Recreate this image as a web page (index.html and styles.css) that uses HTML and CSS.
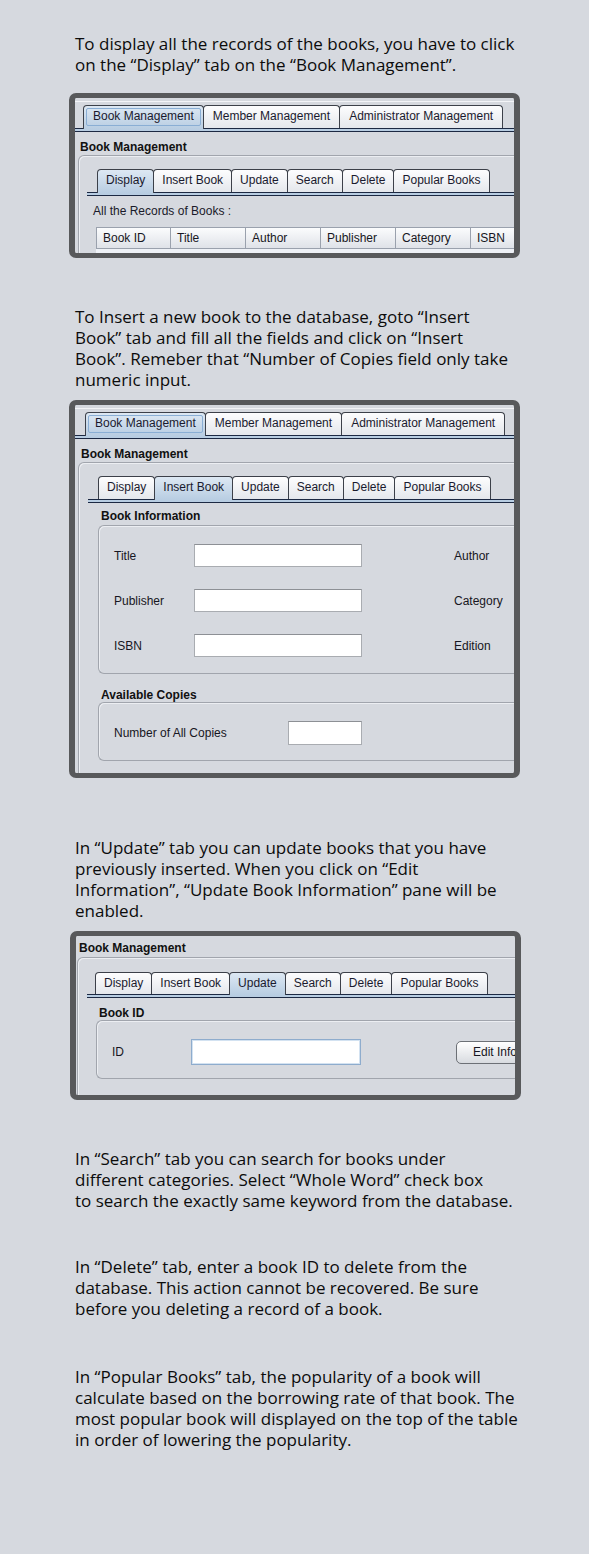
FILE: index.html
```html
<!DOCTYPE html>
<html lang="en">
<head>
<meta charset="utf-8">
<title>Book Management – Help</title>
<link rel="stylesheet" href="styles.css">
</head>
<body>
<main class="doc">
  <p class="note n1">To display all the records of the books, you have to click<br>on the “Display” tab on the “Book Management”.</p>

  <section class="shot s1">
    <div class="win">
      <div class="winline"></div>
      <div class="strip outer">
        <div class="tabs">
          <span class="tab sel focus">Book Management</span>
          <span class="tab">Member Management</span>
          <span class="tab">Administrator Management</span>
        </div>
        <div class="band"></div>
      </div>
      <div class="ttl">Book Management</div>
      <div class="panel">
        <div class="strip inner">
          <div class="tabs">
            <span class="tab sel">Display</span>
            <span class="tab">Insert Book</span>
            <span class="tab">Update</span>
            <span class="tab">Search</span>
            <span class="tab">Delete</span>
            <span class="tab">Popular Books</span>
          </div>
          <div class="band"></div>
        </div>
        <div class="caption">All the Records of Books :</div>
        <div class="thead">
          <span class="th">Book ID</span>
          <span class="th">Title</span>
          <span class="th">Author</span>
          <span class="th">Publisher</span>
          <span class="th">Category</span>
          <span class="th">ISBN</span>
        </div>
        <div class="tbody"></div>
      </div>
    </div>
  </section>

  <p class="note n2">To Insert a new book to the database, goto “Insert<br>Book” tab and fill all the fields and click on “Insert<br>Book”. Remeber that “Number of Copies field only take<br>numeric input.</p>

  <section class="shot s2">
    <div class="win">
      <div class="winline"></div>
      <div class="strip outer">
        <div class="tabs">
          <span class="tab sel focus">Book Management</span>
          <span class="tab">Member Management</span>
          <span class="tab">Administrator Management</span>
        </div>
        <div class="band"></div>
      </div>
      <div class="ttl">Book Management</div>
      <div class="panel">
        <div class="strip inner">
          <div class="tabs">
            <span class="tab">Display</span>
            <span class="tab sel">Insert Book</span>
            <span class="tab">Update</span>
            <span class="tab">Search</span>
            <span class="tab">Delete</span>
            <span class="tab">Popular Books</span>
          </div>
          <div class="band"></div>
        </div>
        <div class="gtitle">Book Information</div>
        <div class="group info">
          <span class="lbl">Title</span><span class="field"></span><span class="lbl far">Author</span>
          <span class="lbl">Publisher</span><span class="field"></span><span class="lbl far">Category</span>
          <span class="lbl">ISBN</span><span class="field"></span><span class="lbl far">Edition</span>
        </div>
        <div class="gtitle gap">Available Copies</div>
        <div class="group copies">
          <span class="lbl">Number of All Copies</span><span class="field short"></span>
        </div>
      </div>
    </div>
  </section>

  <p class="note n3">In “Update” tab you can update books that you have<br>previously inserted. When you click on “Edit<br>Information”, “Update Book Information” pane will be<br>enabled.</p>

  <section class="shot s3">
    <div class="win">
      <div class="ttl">Book Management</div>
      <div class="panel">
        <div class="strip inner">
          <div class="tabs">
            <span class="tab">Display</span>
            <span class="tab">Insert Book</span>
            <span class="tab sel">Update</span>
            <span class="tab">Search</span>
            <span class="tab">Delete</span>
            <span class="tab">Popular Books</span>
          </div>
          <div class="band"></div>
        </div>
        <div class="gtitle">Book ID</div>
        <div class="group idrow">
          <span class="lbl">ID</span><span class="field focused"></span><span class="btn">Edit Information</span>
        </div>
      </div>
    </div>
  </section>

  <p class="note n4">In “Search” tab you can search for books under<br>different categories. Select “Whole Word” check box<br>to search the exactly same keyword from the database.</p>

  <p class="note n5">In “Delete” tab, enter a book ID to delete from the<br>database. This action cannot be recovered. Be sure<br>before you deleting a record of a book.</p>

  <p class="note n6">In “Popular Books” tab, the popularity of a book will<br>calculate based on the borrowing rate of that book. The<br>most popular book will displayed on the top of the table<br>in order of lowering the popularity.</p>
</main>
</body>
</html>
```

FILE: styles.css
```css
html {
  background: #d6d9df;
}
body {
  margin: 0;
  min-height: 1554px;
  background: #d6d9df;
  color: #111;
}
.doc {
  display: flex;
  flex-direction: column;
  align-items: flex-start;
}

/* explanatory paragraphs */
.note {
  margin: 0 0 0 75px;
  font-family: "Open Sans", "DejaVu Sans", sans-serif;
  font-size: 17px;
  line-height: 21px;
  white-space: nowrap;
  color: #0c0c0c;
}
.n1 { margin-top: 33px; }
.n2 { margin-top: 48px; }
.n3 { margin-top: 59px; }
.n4 { margin-top: 48px; }
.n5 { margin-top: 45px; }
.n6 { margin-top: 47px; }

/* screenshot frames */
.shot {
  box-sizing: border-box;
  width: 451px;
  margin-left: 69px;
  border-style: solid;
  border-color: #58595b;
  border-width: 5px 6px;
  border-radius: 7px;
  overflow: hidden;
  background: #d6d9df;
  font-family: "Liberation Sans", Arial, sans-serif;
  font-size: 12px;
  color: #161622;
}
.s1 { margin-top: 18px; height: 165px; }
.s2 { margin-top: 10px; height: 378px; }
.s3 { margin-top: 10px; height: 169px; margin-left: 70px; }

.win {
  padding-top: 3px;
  margin-right: -40px;
}
.s3 .win { padding-top: 5px; }
.winline {
  height: 1px;
  background: #f3f4f7;
}

/* tabs */
.strip { margin-top: 3px; }
.tabs {
  display: flex;
  align-items: flex-end;
  height: 23px;
}
.outer .tabs { padding-left: 8px; }
.s2 .outer .tabs { padding-left: 10px; }
.tab {
  box-sizing: border-box;
  height: 23px;
  padding: 0 8px;
  border: 1px solid #3c4049;
  border-bottom: none;
  border-radius: 4px 4px 0 0;
  margin-left: -1px;
  line-height: 21px;
  white-space: nowrap;
  background: linear-gradient(#fdfdfe, #e4e7ec);
  color: #1a1a2e;
}
.outer .tab { padding: 0 9px; }
.tab:first-child { margin-left: 0; }
.tab.sel {
  position: relative;
  z-index: 1;
  height: 24px;
  margin-bottom: -1px;
  background: linear-gradient(#dde8f3, #b8cde2);
}
.tab.focus::after {
  content: "";
  position: absolute;
  left: 2px;
  right: 2px;
  top: 2px;
  bottom: 3px;
  border: 1px solid #8aaed4;
  border-radius: 2px;
}
.band {
  box-sizing: border-box;
  height: 4px;
  border-top: 1px solid #1c2943;
  border-bottom: 1px solid #1c2943;
  background: #b8cde2;
}

/* titled panel */
.ttl {
  margin: 8px 0 0 5px;
  font-weight: bold;
  line-height: 14px;
  color: #111;
}
.s2 .ttl { margin-left: 6px; }
.s3 .ttl { margin: 0 0 0 3px; }

.panel {
  margin: 1px 0 0 3px;
  padding-top: 13px;
  border: 1px solid #a1a5ad;
  border-bottom: none;
  border-radius: 6px 6px 0 0;
  box-shadow: inset 1px 1px 0 #eceef2;
  min-height: 300px;
}
.s3 .panel { margin: 2px 0 0 1px; padding-top: 14px; }

.inner { margin: 0 0 0 8px; }
.inner .tabs { padding-left: 10px; }
.s2 .inner { margin-left: 9px; }
.s3 .inner { margin-left: 9px; }
.s3 .inner .tabs { padding-left: 8px; }
.s3 .inner .tab { height: 22px; }
.s3 .inner .tab.sel { height: 23px; }
.s3 .inner .tabs { height: 22px; }

/* display tab */
.caption {
  margin: 8px 0 0 14px;
  line-height: 14px;
  color: #1a1a2a;
}
.thead {
  display: flex;
  margin: 9px 0 0 17px;
}
.th {
  box-sizing: border-box;
  width: 76px;
  height: 22px;
  margin-left: -1px;
  padding-left: 6px;
  border: 1px solid #9aa1ad;
  line-height: 20px;
  background: linear-gradient(#fbfcfd, #dfe2e8);
  color: #161622;
}
.th:first-child { margin-left: 0; width: 75px; }
.tbody {
  height: 6px;
  margin-left: 17px;
  background: #eef1f6;
}

/* group boxes */
.gtitle {
  margin: 6px 0 0 22px;
  font-weight: bold;
  line-height: 14px;
  color: #111;
}
.gtitle.gap { margin-top: 14px; }
.s3 .gtitle { margin: 8px 0 0 21px; }

.group {
  display: grid;
  align-items: center;
  margin: 2px 0 0 19px;
  border: 1px solid #a1a5ad;
  border-right: none;
  border-radius: 6px 0 0 6px;
  box-shadow: inset 1px 1px 0 #eceef2;
  padding-left: 15px;
  color: #161622;
}
.s3 .group { margin: 0 0 0 18px; }
.info {
  grid-template-columns: 80px 168px 1fr;
  row-gap: 22px;
  padding-top: 18px;
  padding-bottom: 16px;
}
.copies {
  margin-top: 0;
  grid-template-columns: 174px 74px;
  padding-top: 18px;
  padding-bottom: 15px;
}
.idrow {
  grid-template-columns: 79px 170px 1fr;
  padding-top: 18px;
  padding-bottom: 13px;
}
.lbl { white-space: nowrap; }
.far { padding-left: 92px; }

.field {
  box-sizing: border-box;
  height: 23px;
  background: #fff;
  border: 1px solid #a9acb1;
  border-top-color: #8d9095;
}
.field.short { height: 24px; }
.field.focused {
  height: 26px;
  border: 1px solid #8eaccd;
  box-shadow: inset 0 0 0 1px #d3e2f1;
}
.btn {
  justify-self: start;
  box-sizing: border-box;
  height: 23px;
  margin-left: 95px;
  padding: 0 16px;
  border: 1px solid #6c7076;
  border-radius: 5px;
  line-height: 21px;
  white-space: nowrap;
  background: linear-gradient(#ffffff, #d8dbe0);
  color: #161622;
}
```
